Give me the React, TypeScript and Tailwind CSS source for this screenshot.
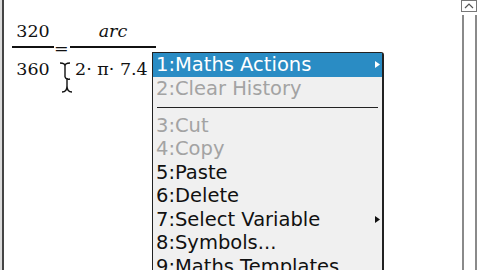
import React from 'react';

const serif = { fontFamily: '"DejaVu Serif", "Liberation Serif", serif' };
const sans = { fontFamily: '"DejaVu Sans", "Liberation Sans", sans-serif' };

type Item = { label: string; disabled?: boolean; sub?: boolean; active?: boolean };

const topItems: Item[] = [
  { label: '1:Maths Actions', sub: true, active: true },
  { label: '2:Clear History', disabled: true },
];

const bottomItems: Item[] = [
  { label: '3:Cut', disabled: true },
  { label: '4:Copy', disabled: true },
  { label: '5:Paste' },
  { label: '6:Delete' },
  { label: '7:Select Variable', sub: true },
  { label: '8:Symbols...' },
  { label: '9:Maths Templates' },
];

function MenuRow({ item }: { item: Item }) {
  return (
    <div
      className={`relative h-[23.5px] leading-[23.5px] pl-[3px] text-[19.5px] whitespace-nowrap ${
        item.active ? 'bg-[#2a8cc4] text-white' : item.disabled ? 'text-[#a3a3a3]' : 'text-[#111]'
      }`}
    >
      {item.label}
      {item.sub && (
        <svg className="absolute right-[2px] top-[8px]" width="5" height="7" viewBox="0 0 5 7">
          <polygon points="0,0 5,3.5 0,7" fill={item.active ? '#ffffff' : '#111111'} />
        </svg>
      )}
    </div>
  );
}

export default function App() {
  return (
    <div className="relative w-[480px] h-[270px] bg-white overflow-hidden flex">
      {/* left frame edge */}
      <div className="w-[2px] bg-[#dcdcdc]" />
      <div className="w-[2px] bg-[#444]" />

      {/* calculator history area */}
      <div className="flex-1 pl-[8px] pt-[21px]" style={serif}>
        <div className="flex items-start text-[17.5px] text-[#111]">
          <div className="w-[42px] flex flex-col">
            <div className="h-[20px] leading-[20px] text-center">320</div>
            <div className="mt-[5px] h-[2px] bg-[#111]" />
            <div className="mt-[10.5px] h-[20px] leading-[20px] text-center">360</div>
          </div>
          <span className="w-[14px] mt-[16.5px] h-[20px] leading-[20px] text-center">=</span>
          <div className="ml-[2px] w-[86px] flex flex-col">
            <div className="h-[20px] leading-[20px] text-center italic">arc</div>
            <div className="mt-[5px] h-[2px] bg-[#111]" />
            <div className="mt-[10.5px] h-[20px] leading-[20px] pl-[5px] whitespace-nowrap">2· π· 7.4</div>
          </div>
        </div>
      </div>

      {/* scrollbar */}
      <div className="w-[16px] mr-[3px] flex flex-col">
        <div className="h-[12px] border border-[#777] bg-white flex items-center justify-center">
          <svg width="10" height="6" viewBox="0 0 10 6">
            <polyline points="1,5 5,1 9,5" fill="none" stroke="#555" strokeWidth="1.2" />
          </svg>
        </div>
        <div className="mt-[3px] ml-[1px] flex-1 border-x-2 border-[#8a8a8a] bg-white" />
      </div>

      {/* text cursor */}
      <svg className="absolute left-[59px] top-[62px]" width="14" height="32" viewBox="0 0 14 32">
        <g fill="none" stroke="#111" strokeWidth="1.4">
          <path d="M1 1 q5 0 5 3 q0 -3 5 -3" />
          <path d="M6 4 V15" />
          <path d="M6 15 q1 3 5 2" />
          <path d="M8 16 V24" />
          <path d="M3 30 q5 0 5 -6 q0 6 5 6" />
        </g>
      </svg>

      {/* context menu */}
      <div
        className="absolute left-[152px] top-[52px] w-[232px] h-[240px] bg-[#f0f0f0] border border-[#222] border-r-2 rounded-tr-[3px]"
        style={sans}
      >
        {topItems.map((it) => (
          <MenuRow key={it.label} item={it} />
        ))}
        <div className="h-[13.5px] pt-[7px]">
          <div className="mx-[4px] h-px bg-[#222]" />
        </div>
        {bottomItems.map((it) => (
          <MenuRow key={it.label} item={it} />
        ))}
      </div>
    </div>
  );
}
